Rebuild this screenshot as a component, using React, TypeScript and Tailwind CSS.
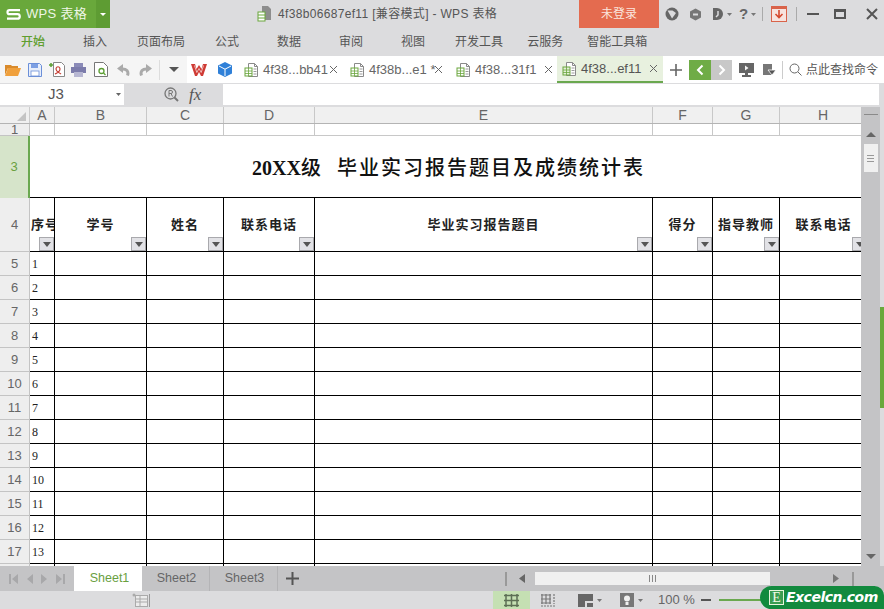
import React from "react";

const uiFont = "font-['Liberation_Sans','Noto_Sans_CJK_SC',sans-serif]";

const menus = [
  { label: "开始", cls: "ml-[21px] text-[#5f9e2f] font-medium" },
  { label: "插入", cls: "ml-[38px]" },
  { label: "页面布局", cls: "ml-[30px]" },
  { label: "公式", cls: "ml-[30px]" },
  { label: "数据", cls: "ml-[38px]" },
  { label: "审阅", cls: "ml-[38px]" },
  { label: "视图", cls: "ml-[38px]" },
  { label: "开发工具", cls: "ml-[30px]" },
  { label: "云服务", cls: "ml-[24px]" },
  { label: "智能工具箱", cls: "ml-[24px]" },
];

const columns = [
  { name: "A", title: "序号", cls: "w-[25px]" },
  { name: "B", title: "学号", cls: "w-[92px]" },
  { name: "C", title: "姓名", cls: "w-[77px]" },
  { name: "D", title: "联系电话", cls: "w-[91px]" },
  { name: "E", title: "毕业实习报告题目", cls: "w-[338px]" },
  { name: "F", title: "得分", cls: "w-[60px]" },
  { name: "G", title: "指导教师", cls: "w-[67px]" },
  { name: "H", title: "联系电话", cls: "w-[87px]" },
];

const rows = Array.from({ length: 13 }, (_, i) => i + 1);

function DocIcon({ active }: { active?: boolean }) {
  return (
    <svg width="15" height="16" viewBox="0 0 15 16" className="shrink-0">
      <path d="M4.5 1.5h6l3 3v10h-9z" fill="#fff" stroke="#8a8a8a" />
      <path d="M10.5 1.5v3h3" fill="none" stroke="#8a8a8a" />
      <rect x="1" y="6" width="7" height="8" fill={active ? "#e4f0d8" : "#fff"} stroke="#6aa63c" />
      <path d="M1 9h7M1 11.500h7M4.500 6v8" stroke="#6aa63c" strokeWidth="0.8" />
      <path d="M9.500 7h3M9.500 9.500h3M9.500 12h3" stroke="#9a9a9a" />
    </svg>
  );
}

function Close({ cls }: { cls: string }) {
  return (
    <svg width="9" height="9" viewBox="0 0 9 9" className={`shrink-0 ${cls}`}>
      <path d="M1 1l7 7M8 1l-7 7" stroke="#666" strokeWidth="1" />
    </svg>
  );
}

function FilterButton() {
  return (
    <div className="absolute bottom-0 right-0 flex h-[14px] w-[15px] items-center justify-center border border-[#a9a9ad] bg-[#e2e2e6]">
      <svg width="8" height="5" viewBox="0 0 8 5">
        <path d="M0 0h8L4 5z" fill="#555" />
      </svg>
    </div>
  );
}

function TitleBar() {
  return (
    <div className="flex h-[28px] shrink-0 items-center bg-[#dcdcde]">
      <div className="flex h-full w-[96px] items-center bg-[#69a83b] pl-[6px] text-[13px] tracking-[0.300px] text-[#eef6e6]">
        <svg width="15" height="11" viewBox="0 0 15 11" className="mr-[5px]">
          <path d="M14 1.200H3.500a2 2 0 0 0 0 4h8a2.200 2.200 0 0 1 0 4.500H1" fill="none" stroke="#fff" strokeWidth="2.200" />
        </svg>
        WPS 表格
      </div>
      <div className="flex h-full w-[14px] items-center justify-center bg-[#5e9c33]">
        <svg width="6" height="3" viewBox="0 0 6 3">
          <path d="M0 0h6L3 3z" fill="#fff" />
        </svg>
      </div>
      <svg width="16" height="18" viewBox="0 0 16 18" className="ml-[147px]">
        <path d="M5 1h6l3 3v11H5z" fill="#8d8d8d" />
        <rect x="1" y="7" width="7" height="9" fill="#fff" stroke="#6aa63c" />
        <path d="M1 10h7M1 13h7" stroke="#6aa63c" />
      </svg>
      <span className="ml-[5px] w-[225px] whitespace-nowrap text-[12px] tracking-[0.330px] text-[#555]">
        4f38b06687ef11 [兼容模式] - WPS 表格
      </span>
      <div className="ml-[76px] flex h-full w-[80px] items-center justify-center bg-[#e46b4f] text-[12px] text-[#fbe6de]">
        未登录
      </div>
      <svg width="14" height="14" viewBox="0 0 14 14" className="ml-[6px]">
        <circle cx="7" cy="7" r="6.500" fill="#666" />
        <path d="M2.500 3.500h5L11 6 7 11.500z" fill="#dcdcde" />
      </svg>
      <svg width="13" height="13" viewBox="0 0 13 13" className="ml-[10px]">
        <path d="M6.500.5l5.500 3v6l-5.500 3-5.500-3v-6z" fill="#777" />
        <path d="M4 6.500h5" stroke="#dcdcde" strokeWidth="2" />
      </svg>
      <svg width="13" height="14" viewBox="0 0 13 14" className="ml-[10px]">
        <path d="M1 1h4a6 6 0 0 1 0 12H1z" fill="#666" />
        <path d="M6 4v4l-2 2" fill="none" stroke="#dcdcde" strokeWidth="1.500" />
      </svg>
      <svg width="5" height="3" viewBox="0 0 5 3" className="ml-[2px]">
        <path d="M0 0h5L2.500 3z" fill="#777" />
      </svg>
      <span className="ml-[7px] text-[15px] font-bold text-[#666]">?</span>
      <svg width="5" height="3" viewBox="0 0 5 3" className="ml-[3px]">
        <path d="M0 0h5L2.500 3z" fill="#777" />
      </svg>
      <div className="ml-[6px] h-[14px] w-px bg-[#aaa]" />
      <svg width="16" height="16" viewBox="0 0 16 16" className="ml-[8px]">
        <rect x="0.500" y="0.500" width="15" height="15" fill="#f7e3de" stroke="#d9634a" />
        <rect x="0" y="0" width="16" height="3" fill="#d9634a" />
        <path d="M8 4v7M4.500 8L8 11.500 11.500 8" fill="none" stroke="#d4492e" strokeWidth="1.600" />
      </svg>
      <div className="ml-[9px] h-[14px] w-px bg-[#aaa]" />
      <div className="ml-[10px] h-[2px] w-[12px] bg-[#555]" />
      <div className="ml-[15px] h-[10px] w-[12px] border-2 border-t-[3px] border-[#555]" />
      <svg width="12" height="12" viewBox="0 0 12 12" className="ml-[20px]">
        <path d="M1 1l10 10M11 1L1 11" stroke="#555" strokeWidth="2" />
      </svg>
    </div>
  );
}

function MenuBar() {
  return (
    <div className="flex h-[28px] shrink-0 items-center bg-[#dcdcde] text-[12px] text-[#555]">
      {menus.map((m) => (
        <span key={m.label} className={m.cls}>
          {m.label}
        </span>
      ))}
    </div>
  );
}

function DocTab({ text, closeCls, cls }: { text: string; closeCls: string; cls: string }) {
  return (
    <div className={`flex shrink-0 items-center whitespace-nowrap text-[13px] text-[#666] ${cls}`}>
      <DocIcon />
      <span className="ml-[4px]">{text}</span>
      <Close cls={closeCls} />
    </div>
  );
}

function Toolbar() {
  return (
    <div className="flex h-[27px] shrink-0 items-center bg-[#f5f5f5]">
      <svg width="16" height="13" viewBox="0 0 16 13" className="ml-[5px]">
        <path d="M0 2h6l1 1h6v2H3L0 12z" fill="#d98a2b" />
        <path d="M3 5h13l-3 8H0z" fill="#f0a03c" />
      </svg>
      <svg width="14" height="14" viewBox="0 0 14 14" className="ml-[7px]">
        <path d="M.5.500h11l2 2v11H.5z" fill="#e8eefb" stroke="#6b8fd8" />
        <rect x="3" y="1" width="7" height="4" fill="#7d9fe3" />
        <rect x="3" y="8" width="8" height="5" fill="#fff" stroke="#6b8fd8" strokeWidth="0.800" />
      </svg>
      <svg width="16" height="15" viewBox="0 0 16 15" className="ml-[7px]">
        <path d="M4.500.500h8l3 3v11h-11z" fill="#fff" stroke="#888" />
        <path d="M0 3h4M2 1v4" stroke="#5c9e33" strokeWidth="1.500" />
        <path d="M6 12c2-1 5-2 5-5s-4-3-4 0 3 3 5 5" fill="none" stroke="#c8443a" strokeWidth="1.200" />
      </svg>
      <svg width="15" height="14" viewBox="0 0 15 14" className="ml-[6px]">
        <rect x="3" y="0" width="9" height="4" fill="#8b8bb8" />
        <rect x="0" y="4" width="15" height="6" fill="#7c7cab" />
        <rect x="3" y="9" width="9" height="5" fill="#b7b7d2" />
      </svg>
      <svg width="14" height="15" viewBox="0 0 14 15" className="ml-[8px]">
        <path d="M.5.500h9l4 4v10H.5z" fill="#fff" stroke="#777" />
        <circle cx="7.500" cy="9" r="2.500" fill="none" stroke="#5c9e33" strokeWidth="1.300" />
        <path d="M9.500 11l2 2" stroke="#5c9e33" strokeWidth="1.300" />
      </svg>
      <svg width="13" height="12" viewBox="0 0 13 12" className="ml-[9px]">
        <path d="M10.500 11.500c1.500-4-1-7-6-6.500" fill="none" stroke="#aaa" strokeWidth="3" />
        <path d="M6 0v9L0 4.500z" fill="#aaa" />
      </svg>
      <svg width="13" height="12" viewBox="0 0 13 12" className="ml-[9px]">
        <path d="M2.500 11.500c-1.500-4 1-7 6-6.500" fill="none" stroke="#aaa" strokeWidth="3" />
        <path d="M7 0v9l6-4.500z" fill="#aaa" />
      </svg>
      <div className="ml-[7px] h-[20px] w-px bg-[#ddd]" />
      <svg width="10" height="5" viewBox="0 0 10 5" className="ml-[9px]">
        <path d="M0 0h10L5 5z" fill="#555" />
      </svg>
      <div className="ml-[8px] flex h-full flex-1 items-center bg-white">
        <svg width="16" height="12" viewBox="0 0 16 12" className="ml-[4px] shrink-0">
          <path d="M0 0h4l1.500 5L8 1l2.500 4L12 0h4l-4 12H10L8 8l-2 4H4z" fill="#cf3b35" />
          <path d="M3.500 1.500l2.300 7 2.200-4 2.200 4 2.300-7" fill="none" stroke="#f6d8d6" strokeWidth="0.800" />
        </svg>
        <svg width="14" height="15" viewBox="0 0 14 15" className="ml-[11px] shrink-0">
          <path d="M7 0l7 3.500v8L7 15l-7-3.500v-8z" fill="#2f80d8" />
          <path d="M1 4l6 3.200L13 4M7 7.200V14" fill="none" stroke="#fff" strokeWidth="1" />
        </svg>
        <DocTab text="4f38...bb41" closeCls="ml-[1px]" cls="ml-[12px] w-[106px]" />
        <DocTab text="4f38b...e1 *" closeCls="-ml-[2px]" cls="w-[106px]" />
        <DocTab text="4f38...31f1" closeCls="ml-[8px]" cls="w-[101px]" />
        <div className="flex h-full w-[106px] shrink-0 items-center whitespace-nowrap border-b-2 border-[#6aa84f] bg-[#e8f1df] pl-[5px] text-[13px] text-[#555]">
          <DocIcon active />
          <span className="ml-[4px]">4f38...ef11</span>
          <Close cls="ml-[8px]" />
        </div>
        <svg width="14" height="14" viewBox="0 0 14 14" className="ml-[6px] shrink-0">
          <path d="M7 1v12M1 7h12" stroke="#666" strokeWidth="1.600" />
        </svg>
        <div className="ml-[6px] flex h-[20px] w-[22px] shrink-0 items-center justify-center bg-[#6fac46]">
          <svg width="8" height="12" viewBox="0 0 8 12">
            <path d="M6.500 1.500L2 6l4.500 4.500" fill="none" stroke="#fff" strokeWidth="2" />
          </svg>
        </div>
        <div className="flex h-[20px] w-[21px] shrink-0 items-center justify-center bg-[#c8c8c8]">
          <svg width="8" height="12" viewBox="0 0 8 12">
            <path d="M1.500 1.500L6 6l-4.500 4.500" fill="none" stroke="#fff" strokeWidth="2" />
          </svg>
        </div>
        <svg width="15" height="14" viewBox="0 0 15 14" className="ml-[7px] shrink-0">
          <rect x="0" y="0" width="15" height="10" fill="#666" />
          <rect x="6" y="10" width="3" height="2" fill="#666" />
          <rect x="3" y="12" width="9" height="2" fill="#666" />
          <path d="M6 2.500v5l3.500-2.500z" fill="#f4f4f4" />
        </svg>
        <svg width="13" height="12" viewBox="0 0 13 12" className="ml-[9px] shrink-0">
          <rect x="0" y="0" width="9" height="11" fill="#777" />
          <path d="M5 6h8l-4 5z" fill="#555" stroke="#fff" strokeWidth="0.800" />
        </svg>
        <div className="ml-[6px] h-[18px] w-px shrink-0 bg-[#ccc]" />
        <svg width="13" height="13" viewBox="0 0 13 13" className="ml-[6px] shrink-0">
          <circle cx="5.500" cy="5.500" r="4.500" fill="none" stroke="#666" />
          <path d="M9 9l3.500 3.500" stroke="#666" />
        </svg>
        <span className="ml-[4px] whitespace-nowrap text-[12px] text-[#555]">点此查找命令</span>
      </div>
    </div>
  );
}

function NameBar() {
  return (
    <div className="flex h-[24px] shrink-0 items-start bg-[#dcdcde] pt-px">
      <div className="relative flex h-[21px] w-[124px] items-center justify-center bg-white pr-[12px] text-[15px] text-[#555]">
        J3
        <svg width="5" height="3" viewBox="0 0 5 3" className="absolute right-[3px] top-[9px]">
          <path d="M0 0h5L2.500 3z" fill="#666" />
        </svg>
      </div>
      <svg width="15" height="15" viewBox="0 0 15 15" className="ml-[40px] mt-[3px]">
        <circle cx="6.500" cy="6.500" r="5.500" fill="none" stroke="#777" strokeWidth="1.300" />
        <path d="M10.500 10.500l3.500 3.500" stroke="#777" strokeWidth="2" />
        <path d="M5 9.500v-6h2a1.500 1.500 0 0 1 0 3H5M7 6.500l1.500 3" fill="none" stroke="#777" />
      </svg>
      <span className="ml-[10px] font-['Liberation_Serif',serif] text-[17px] leading-[21px] italic text-[#555]">fx</span>
      <div className="ml-[22px] h-[21px] w-[656px] bg-white" />
    </div>
  );
}

function ColumnHeader() {
  return (
    <div className="flex h-[17px] shrink-0 border-b border-[#b4b4b4] bg-[#f0f0f0] text-[14px] leading-[16px] text-[#666]">
      <div className="relative w-[30px] shrink-0 border-r border-[#ccc]">
        <div className="absolute bottom-[2px] right-[3px] h-0 w-0 border-b-[9px] border-l-[9px] border-b-[#c4c4c4] border-l-transparent" />
      </div>
      {columns.map((c) => (
        <div key={c.name} className={`${c.cls} shrink-0 border-r border-[#c8c8c8] text-center`}>
          {c.name}
        </div>
      ))}
    </div>
  );
}

function RowLabel({ n, cls, active }: { n: number; cls: string; active?: boolean }) {
  return (
    <div
      className={`flex w-[30px] shrink-0 items-center justify-center border-[#c4c4c4] text-[13px] ${cls} ${
        active
          ? "border-r-2 border-r-[#6aa84f] bg-[#d6e4ca] text-[#6aa03f]"
          : "border-r border-b bg-[#eeeeee] text-[#666]"
      }`}
    >
      {n}
    </div>
  );
}

function Sheet() {
  return (
    <div className="flex min-h-0 flex-1 bg-[#dcdcde]">
      <div className="w-[861px] shrink-0 overflow-hidden bg-white">
        <ColumnHeader />
        <div className="flex h-[12px]">
          <RowLabel n={1} cls="overflow-hidden leading-[12px]" />
          {columns.map((c) => (
            <div key={c.name} className={`${c.cls} shrink-0 border-b border-r border-[#c8c8c8]`} />
          ))}
        </div>
        <div className="flex h-[62px]">
          <RowLabel n={3} cls="" active />
          <div className="flex w-[837px] shrink-0 items-center justify-center border-b border-black pt-[2px] font-['Liberation_Serif','Noto_Sans_CJK_SC',serif] text-[20px] font-medium whitespace-pre text-[#111]">
            <span className="font-bold">20XX</span>
            <span className="tracking-[2px]">级  毕业实习报告题目及成绩统计表</span>
          </div>
        </div>
        <div className="flex h-[54px]">
          <RowLabel n={4} cls="" />
          {columns.map((c, i) => (
            <div
              key={c.name}
              className={`relative ${c.cls} shrink-0 overflow-hidden border-b border-black ${i < 7 ? "border-r" : ""}`}
            >
              <div
                className={`mt-[17px] whitespace-nowrap text-[13px] leading-[20px] font-bold tracking-[1px] text-[#222] ${
                  i === 0 ? "pl-px" : "text-center"
                }`}
              >
                {c.title}
              </div>
              <FilterButton />
            </div>
          ))}
        </div>
        {rows.map((r) => (
          <div key={r} className="flex h-[24px]">
            <RowLabel n={r + 4} cls="" />
            {columns.map((c, i) => (
              <div
                key={c.name}
                className={`${c.cls} shrink-0 border-b border-black ${i < 7 ? "border-r" : ""} ${
                  i === 0 ? "pl-[2px] pt-[3px] font-['Liberation_Serif',serif] text-[12px] leading-[18px] text-[#222]" : ""
                }`}
              >
                {i === 0 ? r : ""}
              </div>
            ))}
          </div>
        ))}
        <div className="flex h-[3px]">
          <div className="w-[30px] shrink-0 border-r border-[#c4c4c4] bg-[#eeeeee]" />
          {columns.map((c, i) => (
            <div key={c.name} className={`${c.cls} shrink-0 border-black ${i < 7 ? "border-r" : ""}`} />
          ))}
        </div>
      </div>
      <VerticalScroll />
      <div className="relative w-[4px] flex-1">
        <div className="absolute left-0 right-0 top-[200px] h-[101px] bg-[#69a83b]" />
      </div>
    </div>
  );
}

function VerticalScroll() {
  return (
    <div className="flex w-[19px] shrink-0 flex-col items-center bg-[#c4c4c6]">
      <div className="mt-[7px] h-px w-[14px] bg-[#8a8a8a]" />
      <svg width="10" height="5" viewBox="0 0 10 5" className="mt-[17px]">
        <path d="M0 5h10L5 0z" fill="#666" />
      </svg>
      <div className="mt-[7px] flex h-[28px] w-[14px] flex-col items-center justify-center gap-[2px] bg-[#f0f0f0]">
        <div className="h-px w-[7px] bg-[#999]" />
        <div className="h-px w-[7px] bg-[#999]" />
        <div className="h-px w-[7px] bg-[#999]" />
      </div>
      <svg width="10" height="5" viewBox="0 0 10 5" className="mb-[7px] mt-auto">
        <path d="M0 0h10L5 5z" fill="#666" />
      </svg>
    </div>
  );
}

function TabBar() {
  return (
    <div className="flex h-[25px] shrink-0 items-center bg-[#c4c4c6] text-[12.500px] text-[#666]">
      <svg width="56" height="10" viewBox="0 0 56 10" className="ml-[9px]">
        <path d="M0 0h2v10H0zM9 0v10L3 5zM24 0v10l-6-5zM32 0v10l6-5zM47 0v10l6-5zM54 0h2v10h-2z" fill="#a8a8aa" />
      </svg>
      <div className="ml-[9px] flex h-full w-[68px] items-center justify-center bg-white pl-[3px] text-[#6aa03f]">Sheet1</div>
      <div className="flex h-full w-[68px] items-center justify-center border-r border-[#b4b4b6] pl-[2px]">Sheet2</div>
      <div className="flex h-full w-[68px] items-center justify-center border-r border-[#b4b4b6] pl-[2px]">Sheet3</div>
      <svg width="13" height="13" viewBox="0 0 13 13" className="ml-[8px]">
        <path d="M6.500 0v13M0 6.500h13" stroke="#555" strokeWidth="2" />
      </svg>
      <div className="ml-[206px] h-[14px] w-[2px] bg-[#999]" />
      <svg width="6" height="9" viewBox="0 0 6 9" className="ml-[12px]">
        <path d="M6 0v9L0 4.500z" fill="#666" />
      </svg>
      <div className="ml-[10px] flex h-[13px] w-[235px] items-center justify-center gap-[2px] bg-[#f0f0f0]">
        <div className="h-[7px] w-px bg-[#888]" />
        <div className="h-[7px] w-px bg-[#888]" />
        <div className="h-[7px] w-px bg-[#888]" />
      </div>
      <svg width="6" height="9" viewBox="0 0 6 9" className="ml-[63px]">
        <path d="M0 0v9l6-4.500z" fill="#777" />
      </svg>
      <div className="ml-[13px] h-[14px] w-[2px] bg-[#999]" />
    </div>
  );
}

function StatusBar() {
  return (
    <div className="flex h-[18px] shrink-0 items-center bg-[#dcdcde] text-[13px] text-[#666]">
      <svg width="16" height="14" viewBox="0 0 16 14" className="ml-[132px]">
        <circle cx="2" cy="2" r="1.500" fill="#aaa" />
        <rect x="3.500" y="2.500" width="12" height="11" fill="#ececec" stroke="#aaa" />
        <path d="M4 6h11M4 9h11M8 3v10" stroke="#aaa" />
      </svg>
      <div className="ml-[1px] h-[13px] w-px bg-[#999]" />
      <div className="ml-[343px] flex h-full w-[37px] items-center justify-center bg-[#c5e0b3]">
        <svg width="15" height="13" viewBox="0 0 15 13">
          <path d="M0 1.500h15M0 6.500h15M0 11.500h15M2 0v13M7.500 0v13M13 0v13" stroke="#5d6f55" strokeWidth="1.500" />
        </svg>
      </div>
      <svg width="15" height="13" viewBox="0 0 15 13" className="ml-[11px]">
        <path d="M0 1h10M0 5h10M0 9h10M1 0v10M5 0v10M9 0v10" stroke="#777" strokeWidth="1.200" />
        <path d="M13 0v10M0 12h15" stroke="#777" strokeWidth="1.200" strokeDasharray="2 1" />
      </svg>
      <svg width="15" height="13" viewBox="0 0 15 13" className="ml-[22px]">
        <path d="M0 0h15v13H0z" fill="#666" />
        <path d="M7 7v6h2V9h6V7z" fill="#dcdcde" />
      </svg>
      <svg width="5" height="3" viewBox="0 0 5 3" className="ml-[4px]">
        <path d="M0 0h5L2.500 3z" fill="#777" />
      </svg>
      <svg width="14" height="14" viewBox="0 0 14 14" className="ml-[18px]">
        <path d="M0 0h14v14H0z" fill="#777" />
        <circle cx="7" cy="5.500" r="3" fill="#f0f0f0" />
        <rect x="5.500" y="9" width="3" height="3" fill="#f0f0f0" />
      </svg>
      <svg width="5" height="3" viewBox="0 0 5 3" className="ml-[4px]">
        <path d="M0 0h5L2.500 3z" fill="#777" />
      </svg>
      <span className="ml-[15px]">100 %</span>
      <div className="ml-[6px] h-[2px] w-[10px] bg-[#555]" />
      <div className="ml-[8px] h-[2px] w-[50px] bg-[#6aa84f]" />
    </div>
  );
}

function Watermark() {
  return (
    <div className="absolute bottom-0 right-0 flex h-[23px] w-[124px] items-center rounded-l-[12px] rounded-tr-[10px] bg-[#128a3e] pl-[9px]">
      <div className="flex h-[15px] w-[15px] items-center justify-center border border-[#e6f5dc] bg-[#3a9d52] font-['Liberation_Serif',serif] text-[14px] leading-none text-[#f2fbe8]">
        E
      </div>
      <span className="ml-[2px] font-['DejaVu_Sans',sans-serif] text-[14px] font-bold italic tracking-[-0.500px] text-white">
        Excelcn.com
      </span>
    </div>
  );
}

export default function App() {
  return (
    <div className={`relative flex h-[609px] w-[884px] flex-col overflow-hidden ${uiFont}`}>
      <TitleBar />
      <MenuBar />
      <Toolbar />
      <NameBar />
      <Sheet />
      <TabBar />
      <StatusBar />
      <Watermark />
    </div>
  );
}
